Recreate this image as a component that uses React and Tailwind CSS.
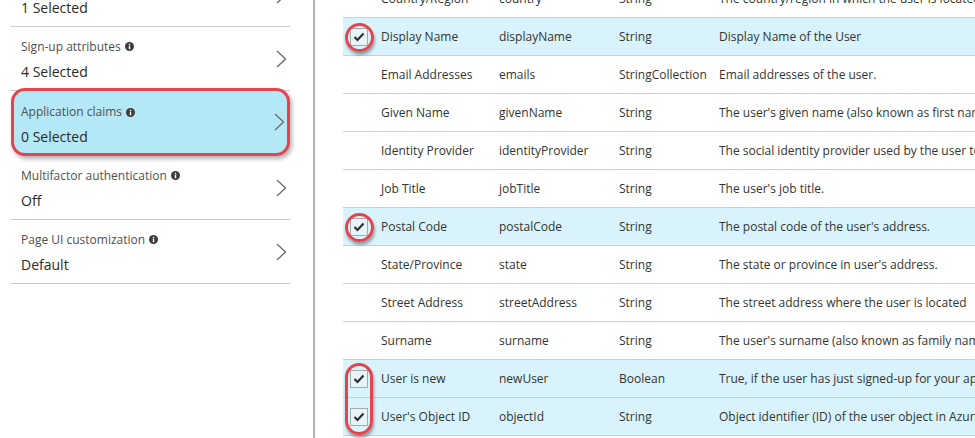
import React from "react";

const font = { fontFamily: '"Open Sans", "Noto Sans", sans-serif' };

function Info() {
  return (
    <svg width="9" height="9" viewBox="0 0 10 10" className="ml-[4px] inline-block">
      <circle cx="5" cy="5" r="5" fill="#3c3c3c" />
      <rect x="4.2" y="4.2" width="1.6" height="3.8" fill="#fff" />
      <rect x="4.2" y="2" width="1.6" height="1.5" fill="#fff" />
    </svg>
  );
}

function Chevron() {
  return (
    <svg width="11" height="18" viewBox="0 0 11 18" className="shrink-0">
      <polyline points="1,1 9.5,9 1,17" fill="none" stroke="#6e6e6e" strokeWidth="1.4" />
    </svg>
  );
}

const leftItems = [
  { label: "User attributes", value: "1 Selected" },
  { label: "Sign-up attributes", value: "4 Selected" },
  { label: "Application claims", value: "0 Selected", active: true },
  { label: "Multifactor authentication", value: "Off" },
  { label: "Page UI customization", value: "Default" },
];

const rows = [
  ["Country/Region", "country", "String", "The country/region in which the user is located.", false],
  ["Display Name", "displayName", "String", "Display Name of the User", true],
  ["Email Addresses", "emails", "StringCollection", "Email addresses of the user.", false],
  ["Given Name", "givenName", "String", "The user's given name (also known as first name).", false],
  ["Identity Provider", "identityProvider", "String", "The social identity provider used by the user to access your application.", false],
  ["Job Title", "jobTitle", "String", "The user's job title.", false],
  ["Postal Code", "postalCode", "String", "The postal code of the user's address.", true],
  ["State/Province", "state", "String", "The state or province in user's address.", false],
  ["Street Address", "streetAddress", "String", "The street address where the user is located", false],
  ["Surname", "surname", "String", "The user's surname (also known as family name or last name).", false],
  ["User is new", "newUser", "Boolean", "True, if the user has just signed-up for your application.", true],
  ["User's Object ID", "objectId", "String", "Object identifier (ID) of the user object in Azure AD.", true],
];

function Checkbox({ circle, oval }) {
  return (
    <div className="relative w-[18px] h-[18px] border border-[#a9a9a9] bg-[#e6f4f8] flex items-center justify-center">
      <svg width="12" height="10" viewBox="0 0 12 10">
        <polyline points="1.5,5 4.5,8 10.5,1.5" fill="none" stroke="#2b2b2b" strokeWidth="2" />
      </svg>
      {circle && (
        <div className="absolute left-[-6px] top-[-6px] w-[29px] h-[29px] rounded-full border-[3px] border-[#e5434d] shadow-[1px_3px_3px_rgba(0,0,0,0.35)]" />
      )}
      {oval && (
        <div className="absolute left-[-6px] top-[-8px] w-[28px] h-[72px] rounded-full border-[3px] border-[#e5434d] shadow-[1px_3px_3px_rgba(0,0,0,0.35)]" />
      )}
    </div>
  );
}

function ItemText({ it, pt }) {
  return (
    <div className={`flex-1 ${pt}`}>
      <div className="text-[12px] leading-[16px] text-[#505050] flex items-center">
        {it.label}
        <Info />
      </div>
      <div className="mt-[7px] text-[14px] leading-[20px] text-[#2a2a2a]">{it.value}</div>
    </div>
  );
}

export default function App() {
  return (
    <div className="w-[975px] h-[438px] overflow-hidden bg-white flex text-[#333]" style={font}>
      <div className="w-[315px] shrink-0 border-r-2 border-[#b3b3b3] h-full">
        <div className="mt-[-37px]">
          {leftItems.map((it, i) =>
            it.active ? (
              <div
                key={i}
                className="ml-[11px] mr-[23px] mt-[-3px] h-[68px] rounded-[14px] border-[3px] border-[#e5434d] bg-[#b4e8f6] shadow-[2px_3px_4px_rgba(0,0,0,0.3)] pl-[7px] pr-[2px] flex items-center"
              >
                <ItemText it={it} pt="pt-[7px]" />
                <Chevron />
              </div>
            ) : (
              <div
                key={i}
                className="ml-[11px] mr-[23px] h-[64px] border-b border-[#c9c9c9] pl-[10px] pr-[3px] flex items-center"
              >
                <ItemText it={it} pt="pt-[3px]" />
                <Chevron />
              </div>
            )
          )}
        </div>
      </div>
      <div className="flex-1 pl-[28px] min-w-0">
        <div className="mt-[-20px]">
          {rows.map(([name, attr, type, desc, checked], i) => (
            <div
              key={i}
              className={`h-[38px] flex items-center border-b border-[#cfcfcf] text-[12px] whitespace-nowrap ${checked ? "bg-[#d8f3fb]" : "bg-white"}`}
            >
              <div className="w-[38px] shrink-0 pl-[7px]">
                {checked && <Checkbox circle={i === 1 || i === 6} oval={i === 10} />}
              </div>
              <div className="w-[118px] shrink-0">{name}</div>
              <div className="w-[120px] shrink-0">{attr}</div>
              <div className="w-[100px] shrink-0">{type}</div>
              <div className="flex-1 overflow-hidden">{desc}</div>
            </div>
          ))}
        </div>
      </div>
    </div>
  );
}
